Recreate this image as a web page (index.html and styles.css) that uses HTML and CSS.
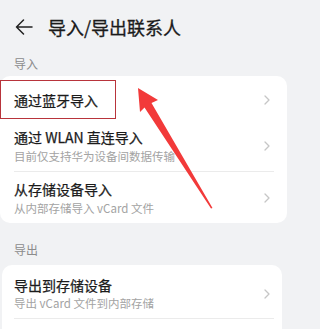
FILE: index.html
```html
<!DOCTYPE html>
<html lang="zh-CN">
<head>
<meta charset="utf-8">
<title>导入/导出联系人</title>
<link rel="stylesheet" href="styles.css">
</head>
<body>
<div class="page">
  <header class="topbar">
    <svg class="back" width="18" height="16" viewBox="0 0 18 16">
      <path d="M1.5 8 H17 M8.5 1 L1.5 8 L8.5 15" fill="none" stroke="#222" stroke-width="1.5" stroke-linecap="round" stroke-linejoin="round"/>
    </svg>
    <h1 class="title">导入/导出联系人</h1>
  </header>

  <div class="section-label">导入</div>
  <div class="card card-import">
    <div class="row row-single">
      <div class="row-text"><div class="row-title">通过蓝牙导入</div></div>
      <svg class="chev" width="6" height="10" viewBox="0 0 6 10"><path d="M1 1 L5 5 L1 9" fill="none" stroke="#c6c6c6" stroke-width="1.3" stroke-linecap="round" stroke-linejoin="round"/></svg>
    </div>
    <div class="row row-double row-divided">
      <div class="row-text">
        <div class="row-title">通过 WLAN 直连导入</div>
        <div class="row-sub">目前仅支持华为设备间数据传输</div>
      </div>
      <svg class="chev" width="6" height="10" viewBox="0 0 6 10"><path d="M1 1 L5 5 L1 9" fill="none" stroke="#c6c6c6" stroke-width="1.3" stroke-linecap="round" stroke-linejoin="round"/></svg>
    </div>
    <div class="row row-double">
      <div class="row-text">
        <div class="row-title">从存储设备导入</div>
        <div class="row-sub">从内部存储导入 vCard 文件</div>
      </div>
      <svg class="chev" width="6" height="10" viewBox="0 0 6 10"><path d="M1 1 L5 5 L1 9" fill="none" stroke="#c6c6c6" stroke-width="1.3" stroke-linecap="round" stroke-linejoin="round"/></svg>
    </div>
  </div>

  <div class="section-label section-label-export">导出</div>
  <div class="card card-export">
    <div class="row row-double row-export row-divided">
      <div class="row-text">
        <div class="row-title">导出到存储设备</div>
        <div class="row-sub">导出 vCard 文件到内部存储</div>
      </div>
      <svg class="chev" width="6" height="10" viewBox="0 0 6 10"><path d="M1 1 L5 5 L1 9" fill="none" stroke="#c6c6c6" stroke-width="1.3" stroke-linecap="round" stroke-linejoin="round"/></svg>
    </div>
  </div>

  <div class="highlight-box"></div>
  <svg class="annot-arrow" width="287" height="329" viewBox="0 0 287 329">
    <polygon points="138,88 158,100 151.5,103 212.5,208 211,208.5 144.5,107.5 140,112" fill="#f23a3a"/>
  </svg>
</div>
</body>
</html>
```

FILE: styles.css
```css
* { box-sizing: border-box; }
html, body { margin: 0; padding: 0; }
body {
  background: #f1f2f4;
  font-family: "Noto Sans CJK SC", "Noto Sans", sans-serif;
  color: #1b1b1b;
}
.page {
  position: relative;
  width: 287px;
  height: 329px;
  overflow: hidden;
  background: #f1f2f4;
}
.topbar {
  height: 54px;
  display: flex;
  align-items: center;
  padding-left: 15px;
}
.back { display: block; }
.title {
  margin: 0 0 0 15px;
  font-size: 18px;
  font-weight: 400;
  line-height: 24px;
  color: #1b1b1b;
  -webkit-text-stroke: 0.3px #1b1b1b;
}
.section-label {
  height: 20px;
  line-height: 20px;
  margin-bottom: 2px;
  padding-left: 14px;
  font-size: 12px;
  color: #8c8c8c;
}
.section-label-export {
  height: 22px;
  line-height: 22px;
  margin-top: 16px;
  margin-bottom: 4px;
}
.card {
  background: #fff;
  border-radius: 10px;
}
.card-import { margin: 0; }
.card-export {
  margin: 0 5px 0 2px;
  padding-bottom: 30px;
}
.row {
  display: flex;
  align-items: center;
  margin: 0 13px 0 14px;
}
.card-export .row { margin: 0 8px 0 12px; }
.row-single {
  height: 44px;
  padding-top: 3px;
}
.row-double {
  padding: 7px 0 6px;
}
.row-export { padding: 10px 0 6px; }
.row-divided { border-bottom: 1px solid #ebebeb; }
.row-text { flex: 1; min-width: 0; }
.row-title {
  font-size: 14px;
  line-height: 20px;
  font-weight: 400;
  color: #1b1b1b;
  -webkit-text-stroke: 0.25px #1b1b1b;
}
.row-sub {
  margin-top: 1px;
  font-size: 11.5px;
  line-height: 17px;
  color: #a3a3a3;
}
.row-export .row-sub { margin-top: 0; }
.chev {
  display: block;
  flex: none;
  margin-right: 4px;
}
.highlight-box {
  position: absolute;
  left: 0;
  top: 80px;
  width: 116px;
  height: 39px;
  border: 1.5px solid #b8343b;
}
.annot-arrow {
  position: absolute;
  left: 0;
  top: 0;
  pointer-events: none;
}
```
